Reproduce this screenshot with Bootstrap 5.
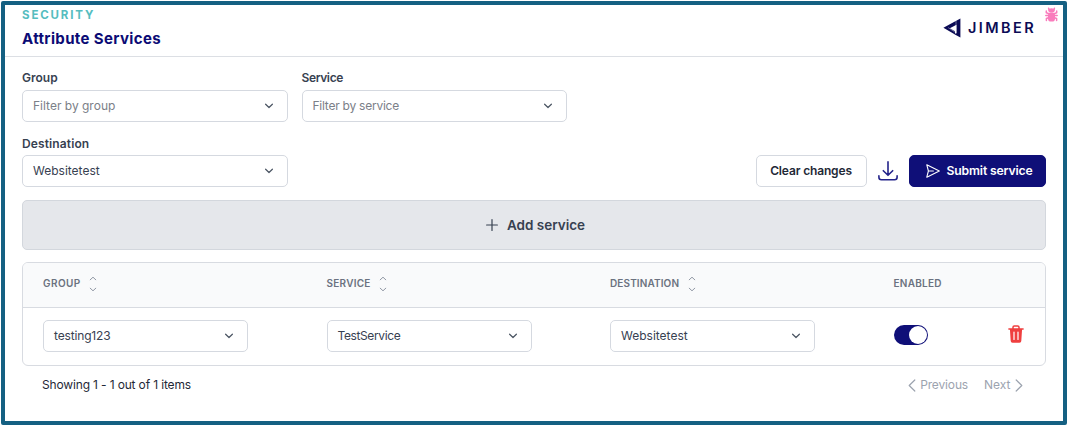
<!DOCTYPE html>
<html lang="en">
<head>
<meta charset="utf-8">
<meta name="viewport" content="width=device-width, initial-scale=1">
<title>Attribute Services</title>
<link href="https://cdn.jsdelivr.net/npm/bootstrap@5.3.0/dist/css/bootstrap.min.css" rel="stylesheet">
<style>
  body { font-family: Inter, "Open Sans", sans-serif; font-size: 12px; line-height: 20px; color: #374151; overflow: hidden; }
  svg { display: block; flex: none; fill: none; stroke: currentColor; stroke-linecap: round; stroke-linejoin: round; }
  .frame { height: 424px; margin: 1px 1px 0; border: 4px solid #156082; border-radius: 2px; }
  .topbar { height: 52px; border-bottom: 1px solid #dcdfe4; padding: 0 28px 0 17px; }
  .eyebrow { font-size: 11.5px; font-weight: 700; letter-spacing: 1.85px; line-height: 14px; color: #55bdbf; padding-top: 3px; }
  .page-title { font-size: 15px; font-weight: 700; letter-spacing: .36px; line-height: 22px; color: #0b0b75; margin: 6px 0 0; }
  .brand { color: #0b0b55; margin-top: 13px; gap: 7px; height: 20px; }
  .brand-name { font-size: 14.5px; font-weight: 600; letter-spacing: 2.4px; margin-right: -1px; }
  .bug { top: 2px; right: 5px; color: #f97cbc; }
  .content-area { padding: 11px 17px 0; }
  .filters { gap: 14px; }
  .field { width: 265.5px; }
  .field-label { display: block; font-weight: 600; color: #374151; margin-bottom: 2px; }
  .second-row { margin-top: 11px; }
  .second-row .field-label { position: relative; top: 1px; }
  .picker { height: 32px; width: 100%; border: 1px solid #d5d9e0; border-radius: 5px; background: #fff; padding: 0 13px 0 10px; color: #374151; text-align: left; }
  .picker.empty { color: #7b8088; }
  .picker svg { color: #4b5563; }
  .action { height: 32px; border-radius: 5px; font-size: 12px; font-weight: 600; line-height: 20px; padding: 0 13px; }
  .action-clear { border: 1px solid #d5d9e0; color: #1f2937; background: #fff; width: 111px; }
  .action-submit { background: #0f0f78; border-color: #0f0f78; color: #fff; width: 137.5px; padding-left: 16px; gap: 7px; font-size: 12.2px; }
  .download { color: #23238a; margin: 0 8px; }
  .add-bar { height: 50px; margin-top: 13px; background: #e5e7eb; border: 1px solid #d3d7dd; border-radius: 5px; font-size: 13.5px; font-weight: 600; color: #374151; gap: 9px; padding: 0 0 1px 3px; }
  .grid-box { margin-top: 12px; border: 1px solid #d8dbe1; border-radius: 6px; height: 104px; overflow: hidden; }
  .services { table-layout: fixed; margin: 0; --bs-table-bg: transparent; --bs-table-color: #374151; }
  .services th { height: 44px; padding: 0 20px 3px; vertical-align: middle; background: #f9fafb; border-bottom: 1px solid #d8dbe1; font-size: 10px; font-weight: 600; line-height: 16px; color: #6b7280; }
  .services td { height: 58px; padding: 0 20px; border: 0; }
  .services .picker { width: 205px; }
  .c-main { width: 283.5px; }
  .c-enabled { width: 110px; }
  .sorter { color: #9299a5; margin-left: 8.5px; position: relative; top: 1px; }
  .switch-track { width: 34px; height: 20px; border-radius: 10px; background: #0f0f78; padding: 1px; margin-top: -2px; }
  .switch-knob { width: 18px; height: 18px; border-radius: 50%; background: #fff; }
  .trash { color: #ef3f3f; margin: -4px 1px 0 0; }
  .pager { padding: 9px 23.5px 0 20px; color: #1f2937; }
  .pager-step { color: #9ca3af; gap: 4px; }
  .ls-a { letter-spacing: .12px; }
  .ls-b { letter-spacing: -.15px; }
  .ls-c { letter-spacing: -.24px; }
  .ls-d { letter-spacing: -.38px; }
  .ls-e { letter-spacing: .25px; }
  .ls-f { letter-spacing: .45px; }
</style>
</head>
<body>
<svg width="0" height="0" class="position-absolute" aria-hidden="true">
  <symbol id="chev" viewBox="0 0 10 6"><path d="M1.600 1.200 5 4.500 8.400 1.200"/></symbol>
  <symbol id="sort" viewBox="0 0 8 16"><path d="M1.200 3.800 4 1.200l2.800 2.600M1.200 12.200 4 14.800l2.800-2.600"/></symbol>
</svg>
<div class="frame position-relative">
  <svg class="bug position-absolute" width="13" height="15" viewBox="0 0 13 15" stroke-width="1.500"><path d="M4.200 3.500 3.600 1.200M8.800 3.500 9.400 1.200M4 6.700 1.300 5.800V4M9 6.700l2.700-.9V4M4 8.500H.8M9 8.500h3.200M4 10.500l-2.600 1V13.500M9 10.500l2.600 1V13.500"/><ellipse cx="6.500" cy="3.400" rx="3" ry="2.200" fill="currentColor" stroke="none"/><rect x="3" y="5.600" width="7" height="9" rx="3.200" fill="currentColor" stroke="none"/></svg>
  <header class="topbar d-flex justify-content-between align-items-start">
    <div>
      <div class="eyebrow">SECURITY</div>
      <h1 class="page-title">Attribute Services</h1>
    </div>
    <div class="brand d-flex align-items-center">
      <svg width="18" height="20" viewBox="0 0 18 20"><path d="M17.400.4v19L11.400 16.200 13.500 14.700V6.700L6.800 10.200 12 13.200V16.500L.4 9.700z" fill="currentColor" stroke="none"/><path d="M13 3v12.200M5.500 9.800l7.500 5" stroke="#fff" stroke-width=".4"/></svg>
      <span class="brand-name">JIMBER</span>
    </div>
  </header>
  <main class="content-area">
    <div class="filters d-flex">
      <div class="field"><span class="field-label">Group</span>
        <button class="picker empty d-flex align-items-center justify-content-between" type="button">Filter by group<svg width="10" height="6" stroke-width="1.200"><use href="#chev"/></svg></button></div>
      <div class="field"><span class="field-label ls-d">Service</span>
        <button class="picker empty d-flex align-items-center justify-content-between ls-c" type="button">Filter by service<svg width="10" height="6" stroke-width="1.200"><use href="#chev"/></svg></button></div>
    </div>
    <div class="second-row d-flex justify-content-between align-items-end">
      <div class="field"><span class="field-label ls-a">Destination</span>
        <button class="picker d-flex align-items-center justify-content-between" type="button">Websitetest<svg width="10" height="6" stroke-width="1.200"><use href="#chev"/></svg></button></div>
      <div class="d-flex align-items-center">
        <button class="btn action action-clear ls-b text-nowrap" type="button">Clear changes</button>
        <svg class="download" width="26" height="20" viewBox="0 0 26 20" stroke-width="1.600"><path d="M13 .9v13M8.300 9.700l4.700 4.600 4.700-4.600M3.900 14.800v1.400a2.500 2.500 0 0 0 2.500 2.500h13.200a2.500 2.500 0 0 0 2.500-2.500v-1.400"/></svg>
        <button class="btn action action-submit ls-b text-nowrap d-flex align-items-center" type="button"><svg width="14" height="14" viewBox="0 0 14 14" stroke-width="1.100"><path d="M.8.8 13.300 7 .8 13.200 2.400 7zM2.400 7h5"/></svg>Submit service</button>
      </div>
    </div>
    <div class="add-bar d-flex align-items-center justify-content-center"><svg width="12" height="12" viewBox="0 0 12 12" stroke-width="1.200"><path d="M6 .6v10.800M.6 6h10.800"/></svg>Add service</div>
    <div class="grid-box">
      <table class="table services align-middle">
        <colgroup><col class="c-main"><col class="c-main"><col class="c-main"><col class="c-enabled"><col></colgroup>
        <thead><tr>
          <th><div class="d-flex align-items-center ls-f">GROUP<svg class="sorter" width="8" height="16"><use href="#sort"/></svg></div></th>
          <th><div class="d-flex align-items-center ls-e">SERVICE<svg class="sorter" width="8" height="16"><use href="#sort"/></svg></div></th>
          <th><div class="d-flex align-items-center ls-a">DESTINATION<svg class="sorter" width="8" height="16"><use href="#sort"/></svg></div></th>
          <th class="ls-e">ENABLED</th><th></th>
        </tr></thead>
        <tbody><tr>
          <td><button class="picker d-flex align-items-center justify-content-between ls-b" type="button">testing123<svg width="10" height="6" stroke-width="1.200"><use href="#chev"/></svg></button></td>
          <td><button class="picker d-flex align-items-center justify-content-between ls-d" type="button">TestService<svg width="10" height="6" stroke-width="1.200"><use href="#chev"/></svg></button></td>
          <td><button class="picker d-flex align-items-center justify-content-between" type="button">Websitetest<svg width="10" height="6" stroke-width="1.200"><use href="#chev"/></svg></button></td>
          <td><div class="switch-track d-flex justify-content-end"><div class="switch-knob"></div></div></td>
          <td><div class="d-flex justify-content-end"><svg class="trash" width="16" height="18" viewBox="0 0 16 18"><path d="M5 3.200V2.200Q5 .9 6.300.9h3.400Q11 .9 11 2.200v1M.9 3.900h14.200" stroke-width="1.500"/><path d="M1.900 4h12.200l-.8 12a1.800 1.800 0 0 1-1.800 1.700h-7A1.800 1.800 0 0 1 2.700 16z" fill="currentColor" stroke="none"/><path d="M6 7v7.500M10 7v7.500" stroke="#fff" stroke-width="1.200"/></svg></div></td>
        </tr></tbody>
      </table>
    </div>
    <div class="pager d-flex justify-content-between">
      <span class="ls-b">Showing 1 - 1 out of 1 items</span>
      <div class="d-flex gap-3">
        <span class="pager-step d-flex align-items-center ls-b"><svg width="8" height="13" viewBox="0 0 8 13" stroke-width="1.200"><path d="M6.800 1 1.200 6.500l5.600 5.500"/></svg>Previous</span>
        <span class="pager-step d-flex align-items-center">Next<svg width="8" height="13" viewBox="0 0 8 13" stroke-width="1.200"><path d="m1.200 1 5.600 5.500L1.200 12"/></svg></span>
      </div>
    </div>
  </main>
</div>
<script src="https://cdn.jsdelivr.net/npm/bootstrap@5.3.0/dist/js/bootstrap.bundle.min.js"></script>
</body>
</html>
